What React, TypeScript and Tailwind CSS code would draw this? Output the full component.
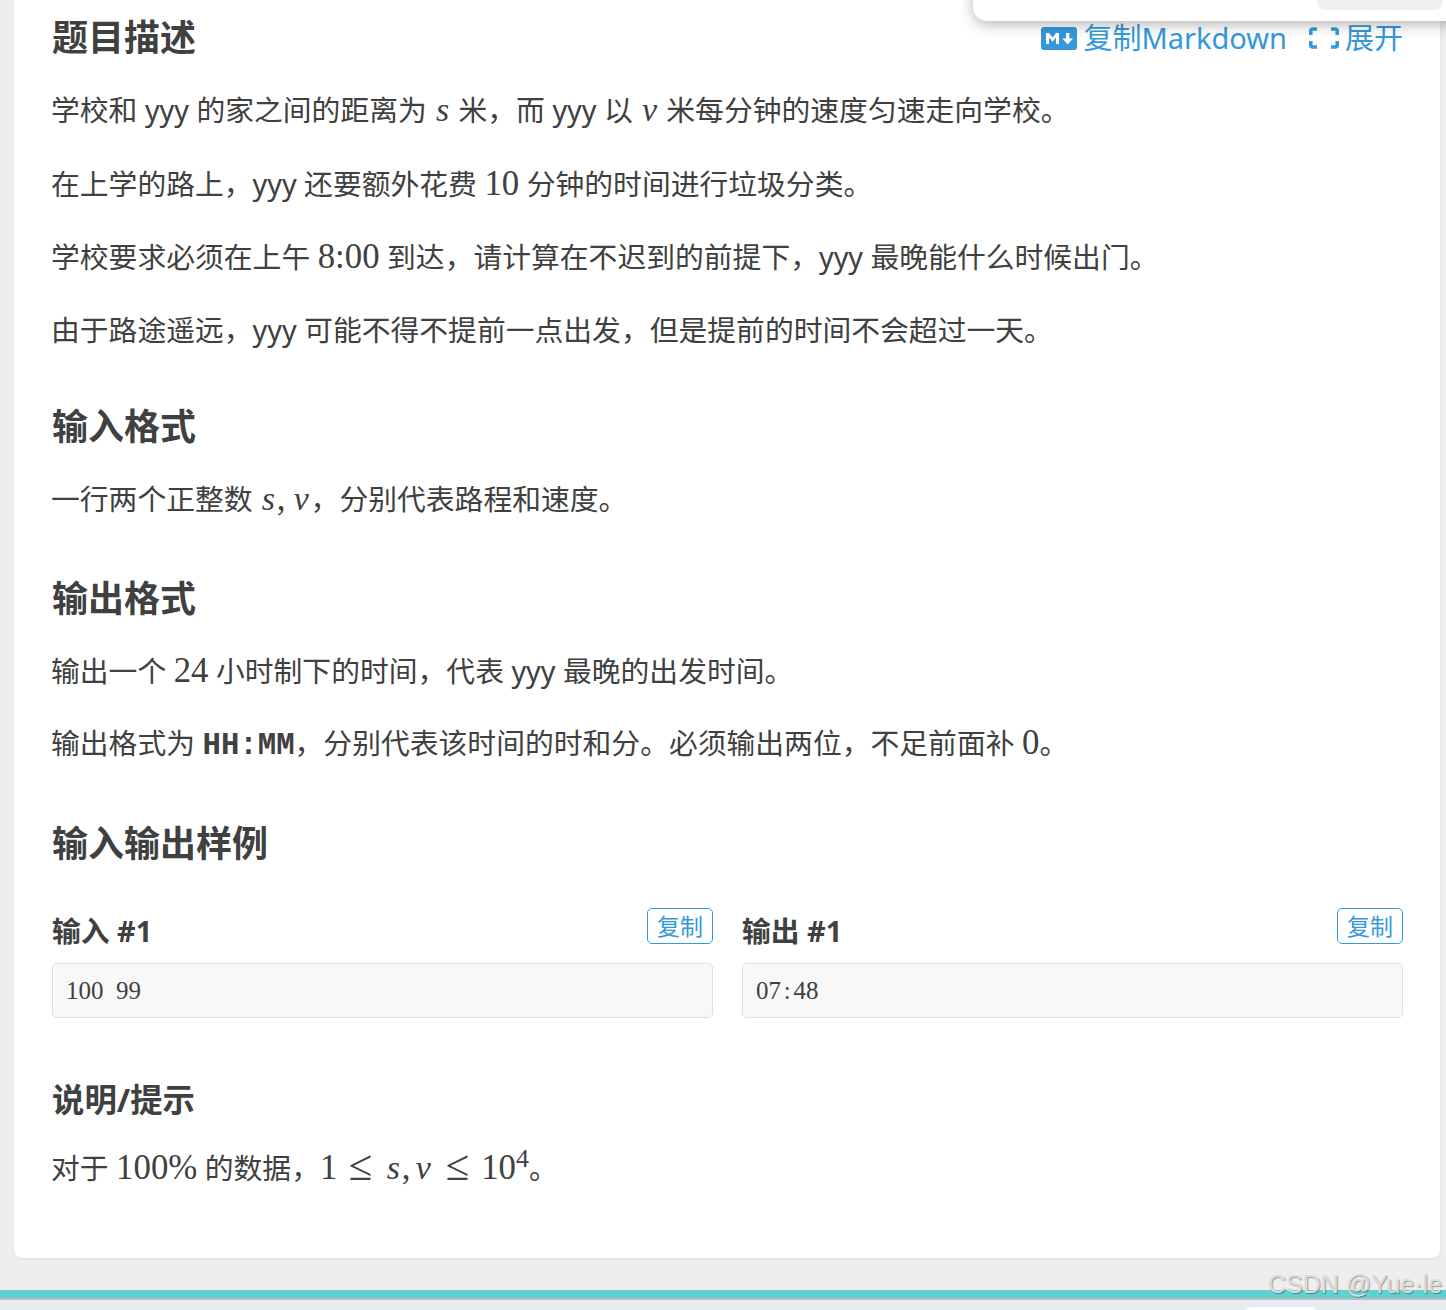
const sans = "font-['Noto_Sans','Noto_Sans_CJK_SC',sans-serif]";

function M({ children }: { children: React.ReactNode }) {
  return <span className="font-['Liberation_Serif',serif] italic text-[34px] px-[1.75px] leading-none">{children}</span>;
}
function N({ children, className = "" }: { children: React.ReactNode; className?: string }) {
  return <span className={`font-['Liberation_Serif',serif] text-[34.8px] leading-none ${className}`}>{children}</span>;
}
function Le({ className = "" }: { className?: string }) {
  return <span className={`font-['Liberation_Serif',serif] text-[43px] leading-none inline-block align-[-1px] ${className}`}>≤</span>;
}
function P({ children, className = "" }: { children: React.ReactNode; className?: string }) {
  return <p className={`-ml-[1px] h-[44px] leading-[44px] mb-[29px] text-[28.8px] whitespace-nowrap ${className}`}>{children}</p>;
}
function H({ children }: { children: React.ReactNode }) {
  return <h2 className="h-[54px] leading-[54px] font-bold text-[36px] whitespace-nowrap">{children}</h2>;
}
function Sample({ title, value }: { title: string; value: React.ReactNode }) {
  return (
    <div className="flex-1 min-w-0">
      <div className="flex justify-between items-start h-[55px]">
        <span className="mt-[4px] text-[28.8px] leading-[38px] font-bold">{title}</span>
        <button className="w-[66px] h-[36px] border border-[#3498db] rounded-[5px] text-[#3498db] text-[23px] leading-[32px] bg-white">复制</button>
      </div>
      <div className="h-[55px] border border-[#e0e0e0] rounded-[5px] bg-[#f8f8f8] px-[13px] leading-[53px] text-[25px] font-['Liberation_Serif',serif] whitespace-pre">{value}</div>
    </div>
  );
}

export default function App() {
  return (
    <div className={`relative w-[1446px] h-[1310px] overflow-hidden bg-[#eeeeee] text-[#404040] ${sans}`}>
      <main className="relative w-[1426px] h-[1258px] ml-[14px] bg-white rounded-b-[8px] shadow-[0_1px_3px_rgba(0,0,0,0.08)] pl-[38px] pr-[37px] pt-[11px]">
        <div className="flex justify-between items-start">
          <H>题目描述</H>
          <div className="flex items-center gap-[22px] text-[#3498db] text-[29px] leading-[54px]">
            <span className="flex items-center gap-[6px]">
              <svg width="36" height="23" viewBox="0 0 36 23" aria-hidden="true">
                <rect width="36" height="23" rx="3" fill="#3498db" />
                <path d="M5 17V6h3l3.5 4.4L15 6h3v11h-3v-6.4l-3.5 4.2L8 10.6V17z" fill="#fff" />
                <path d="M25 6h3.4v5.6H32L26.7 17.5l-5.3-5.9H25z" fill="#fff" />
              </svg>
              复制Markdown
            </span>
            <span className="flex items-center gap-[6px]">
              <svg width="30" height="22" viewBox="0 0 30 22" fill="none" stroke="#3498db" strokeWidth="3.6" aria-hidden="true">
                <path d="M8 2H3.8a2 2 0 0 0-2 2v4M1.8 14v4a2 2 0 0 0 2 2H8M22 2h4.2a2 2 0 0 1 2 2v4M28.2 14v4a2 2 0 0 1-2 2H22" />
              </svg>
              展开
            </span>
          </div>
        </div>
        <div className="mt-[23px]">
          <P className="!mb-[30px]">学校和 yyy 的家之间的距离为 <M>s</M> 米，而 yyy 以 <M>v</M> 米每分钟的速度匀速走向学校。</P>
          <P>在上学的路上，yyy 还要额外花费 <N>10</N> 分钟的时间进行垃圾分类。</P>
          <P>学校要求必须在上午 <N>8:00</N> 到达，请计算在不迟到的前提下，yyy 最晚能什么时候出门。</P>
          <P>由于路途遥远，yyy 可能不得不提前一点出发，但是提前的时间不会超过一天。</P>
        </div>
        <div className="mt-[48px] mb-[23px]"><H>输入格式</H></div>
        <P>一行两个正整数 <M>s</M><N className="mr-[6.5px]">,</N><M>v</M>，分别代表路程和速度。</P>
        <div className="mt-[51px] mb-[23px]"><H>输出格式</H></div>
        <P className="!mb-[28px]">输出一个 <N>24</N> 小时制下的时间，代表 yyy 最晚的出发时间。</P>
        <P>输出格式为 <code className="font-['Liberation_Mono',monospace] font-bold text-[30.7px]">HH:MM</code>，分别代表该时间的时和分。必须输出两位，不足前面补 <N>0</N>。</P>
        <div className="mt-[52px]"><H>输入输出样例</H></div>
        <div className="flex gap-[29px] mt-[37px]">
          <Sample title="输入 #1" value="100  99" />
          <Sample title="输出 #1" value={<>07<span className="inline-block w-[12.5px] text-center">:</span>48</>} />
        </div>
        <h3 className="mt-[57px] h-[48px] leading-[48px] text-[32.4px] font-bold">说明/提示</h3>
        <p className="-ml-[1px] mt-[21px] h-[44px] leading-[44px] text-[28.8px] whitespace-nowrap">
          对于 <N>100%</N> 的数据，<N>1</N><Le className="ml-[11px] mr-[13px]" /><M>s</M><N className="mr-[3.5px]">,</N><M>v</M><Le className="ml-[13px] mr-[12px]" /><N>10</N><sup className="font-['Liberation_Serif',serif] text-[26px] -top-[12px]">4</sup>。
        </p>
      </main>
      <div className="mt-[32px] h-[10px] bg-[#5fd1d1] border-b-[2px] border-[#bdbdbd]" />
      <div className="relative h-[10px] bg-[#e8ecf2]">
        <div className="absolute left-[1245px] top-[7px] w-[72px] h-[8px] bg-white rounded-t-[6px]" />
      </div>
      <div className="absolute top-[-20px] left-[973px] w-[490px] h-[41px] bg-white rounded-[14px] shadow-[0_4px_14px_rgba(0,0,0,0.28)]">
        <div className="absolute right-[20px] bottom-[11px] w-[126px] h-[20px] bg-[#f0f0f0] rounded-[8px]" />
      </div>
      <span className="absolute left-[1268px] top-[1268px] text-[25px] leading-[32px] text-[#dcdcdc] font-['Liberation_Sans',sans-serif] whitespace-nowrap [text-shadow:1px_1px_1px_rgba(0,0,0,0.35)]">CSDN @Yue·le</span>
    </div>
  );
}
